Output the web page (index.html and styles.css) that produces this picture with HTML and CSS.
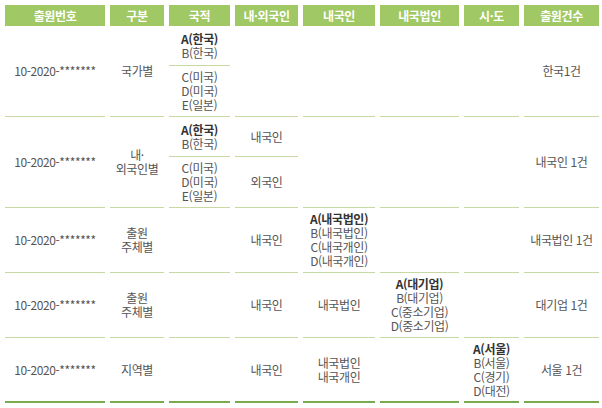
FILE: index.html
```html
<!DOCTYPE html>
<html lang="ko">
<head>
<meta charset="utf-8">
<link rel="stylesheet" href="styles.css">
</head>
<body>
<table class="grid">
  <colgroup>
    <col class="c1"><col class="c2"><col class="c3"><col class="c4"><col class="c5"><col class="c6"><col class="c7"><col class="c8">
  </colgroup>
  <thead>
    <tr><th>출원번호</th><th>구분</th><th>국적</th><th>내·외국인</th><th>내국인</th><th>내국법인</th><th>시·도</th><th>출원건수</th></tr>
  </thead>
  <tbody>
    <tr class="sa">
      <td rowspan="2">10-2020-*******</td>
      <td rowspan="2">국가별</td>
      <td class="sub"><b>A(한국)</b><br>B(한국)</td>
      <td rowspan="2"></td>
      <td rowspan="2"></td>
      <td rowspan="2"></td>
      <td rowspan="2"></td>
      <td rowspan="2">한국1건</td>
    </tr>
    <tr class="sb">
      <td>C(미국)<br>D(미국)<br>E(일본)</td>
    </tr>
    <tr class="sa">
      <td rowspan="2">10-2020-*******</td>
      <td rowspan="2">내·<br>외국인별</td>
      <td class="sub"><b>A(한국)</b><br>B(한국)</td>
      <td class="sub">내국인</td>
      <td rowspan="2"></td>
      <td rowspan="2"></td>
      <td rowspan="2"></td>
      <td rowspan="2" class="low-s">내국인 1건</td>
    </tr>
    <tr class="sb">
      <td>C(미국)<br>D(미국)<br>E(일본)</td>
      <td>외국인</td>
    </tr>
    <tr class="single">
      <td>10-2020-*******</td>
      <td>출원<br>주체별</td>
      <td></td>
      <td>내국인</td>
      <td><b>A(내국법인)</b><br>B(내국법인)<br>C(내국개인)<br>D(내국개인)</td>
      <td></td>
      <td></td>
      <td class="high">내국법인 1건</td>
    </tr>
    <tr class="single">
      <td>10-2020-*******</td>
      <td>출원<br>주체별</td>
      <td></td>
      <td>내국인</td>
      <td>내국법인</td>
      <td><b>A(대기업)</b><br>B(대기업)<br>C(중소기업)<br>D(중소기업)</td>
      <td></td>
      <td>대기업 1건</td>
    </tr>
    <tr class="single last">
      <td>10-2020-*******</td>
      <td>지역별</td>
      <td></td>
      <td>내국인</td>
      <td>내국법인<br>내국개인</td>
      <td></td>
      <td><b>A(서울)</b><br>B(서울)<br>C(경기)<br>D(대전)</td>
      <td class="low">서울 1건</td>
    </tr>
  </tbody>
</table>
</body>
</html>
```
FILE: styles.css
```css
html, body {
  margin: 0;
  padding: 0;
  background: #ffffff;
  overflow: hidden;
}

body {
  font-family: "Noto Sans CJK KR", "Noto Sans", sans-serif;
  font-size: 12px;
  letter-spacing: -0.4px;
  color: #555555;
}

.grid {
  margin-top: 5px;
  border-collapse: separate;
  border-spacing: 5px 0;
  table-layout: fixed;
  width: 604px;
}

.c1 { width: 100px; }
.c2 { width: 54px; }
.c3 { width: 61px; }
.c4 { width: 63px; }
.c5 { width: 72px; }
.c6 { width: 79px; }
.c7 { width: 55px; }
.c8 { width: 75px; }

.grid th {
  height: 21px;
  padding: 0;
  background: #a0c864;
  color: #ffffff;
  font-weight: bold;
  font-size: 12px;
  line-height: 21px;
  text-align: center;
  vertical-align: middle;
}

.grid td {
  padding: 0;
  text-align: center;
  vertical-align: middle;
  line-height: 14px;
  border-bottom: 1px solid #c6d9a3;
  white-space: nowrap;
}

.grid td b {
  color: #333333;
  font-weight: bold;
}

.sa { height: 40px; }
.sb { height: 51px; }
.single { height: 65px; }

.last td {
  border-bottom: 2px solid #79aa4e;
}

.low { padding-top: 20px; }
.low-s { padding-top: 5px; }
.high { padding-bottom: 14px; }
```
